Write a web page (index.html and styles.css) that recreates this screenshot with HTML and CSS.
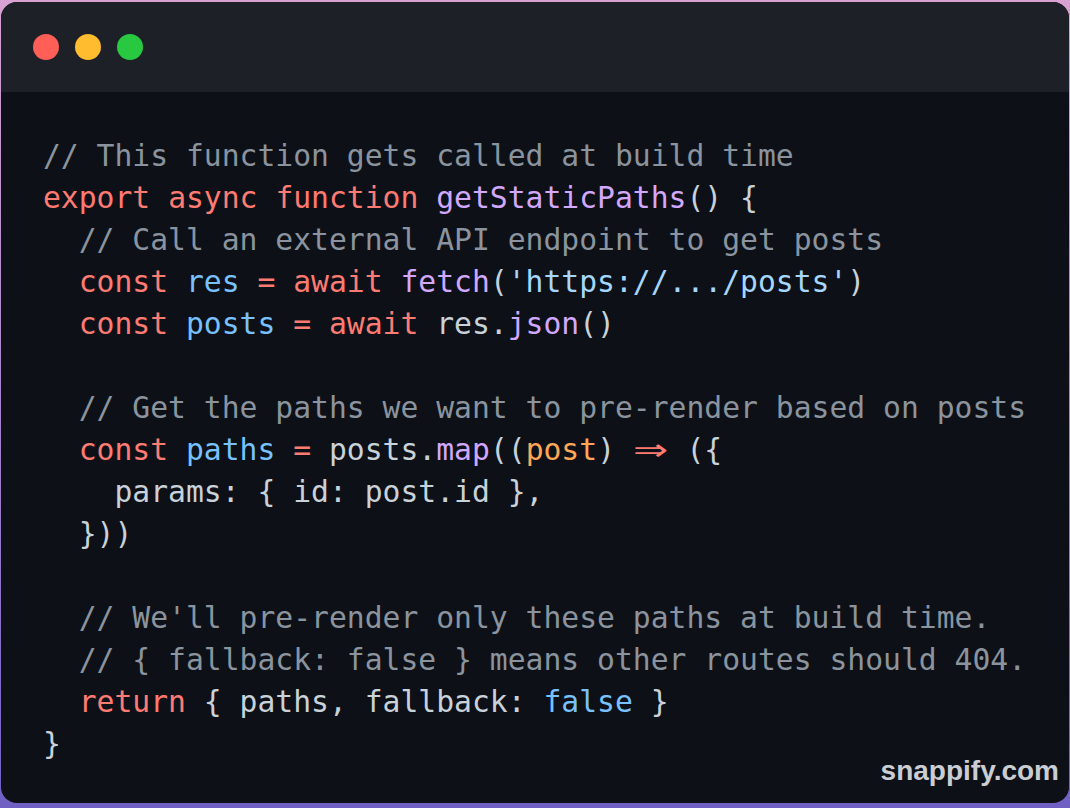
FILE: index.html
```html
<!DOCTYPE html>
<html lang="en">
<head>
<meta charset="utf-8">
<title>snappify code snippet</title>
<link rel="stylesheet" href="styles.css">
</head>
<body>
<div class="window">
  <div class="titlebar">
    <span class="dot red"></span>
    <span class="dot yellow"></span>
    <span class="dot green"></span>
  </div>
  <div class="code-area">
<pre class="code"><span class="c">// This function gets called at build time</span>
<span class="k">export</span> <span class="k">async</span> <span class="k">function</span> <span class="f">getStaticPaths</span>() {
  <span class="c">// Call an external API endpoint to get posts</span>
  <span class="k">const</span> <span class="v">res</span> <span class="k">=</span> <span class="k">await</span> <span class="f">fetch</span>(<span class="s">'https://.../posts'</span>)
  <span class="k">const</span> <span class="v">posts</span> <span class="k">=</span> <span class="k">await</span> res.<span class="f">json</span>()

  <span class="c">// Get the paths we want to pre-render based on posts</span>
  <span class="k">const</span> <span class="v">paths</span> <span class="k">=</span> posts.<span class="f">map</span>((<span class="p">post</span>) <span class="k arrow"><span class="arrow-glyph">⇒</span></span> ({
    params: { id: post.id },
  }))

  <span class="c">// We'll pre-render only these paths at build time.</span>
  <span class="c">// { fallback: false } means other routes should 404.</span>
  <span class="k">return</span> { paths, fallback: <span class="v">false</span> }
}</pre>
    <div class="watermark">snappify.com</div>
  </div>
</div>
</body>
</html>
```

FILE: styles.css
```css
html, body {
  margin: 0;
  height: 100%;
}

body {
  box-sizing: border-box;
  padding: 2px 1px 5px 1px;
  background: linear-gradient(180deg, #d8a2d2 0%, #a885cc 50%, #7060c4 100%);
  display: flex;
}

.window {
  flex: 1;
  display: flex;
  flex-direction: column;
  border-radius: 16px;
  overflow: hidden;
  background: #0d1117;
}

.titlebar {
  height: 90px;
  flex: none;
  background: #1e2027;
  display: flex;
  align-items: center;
  gap: 16px;
  padding-left: 32px;
  box-sizing: border-box;
}

.dot {
  width: 26px;
  height: 26px;
  border-radius: 50%;
  display: block;
}

.red { background: #ff5f57; }
.yellow { background: #febc2e; }
.green { background: #28c840; }

.code-area {
  flex: 1;
  position: relative;
  padding: 43px 0 0 42px;
}

.code {
  margin: 0;
  font-family: "DejaVu Sans Mono", "Liberation Mono", monospace;
  font-size: 29.7px;
  line-height: 42px;
  color: #c9d1d9;
  white-space: pre;
}

.c { color: #8b949e; }
.k { color: #ff7b72; }
.f { color: #d2a8ff; }
.v { color: #79c0ff; }
.s { color: #a5d6ff; }
.p { color: #ffa657; }

.arrow {
  display: inline-block;
  width: 2ch;
  text-align: center;
  line-height: 42px;
  vertical-align: top;
}

.arrow-glyph {
  display: inline-block;
  font-family: "DejaVu Sans", sans-serif;
  font-size: 30px;
  transform: scaleX(1.4);
}

.watermark {
  position: absolute;
  right: 10px;
  bottom: 16px;
  font-family: "Liberation Sans", Arial, sans-serif;
  font-weight: bold;
  font-size: 28px;
  color: #caced3;
}
```
